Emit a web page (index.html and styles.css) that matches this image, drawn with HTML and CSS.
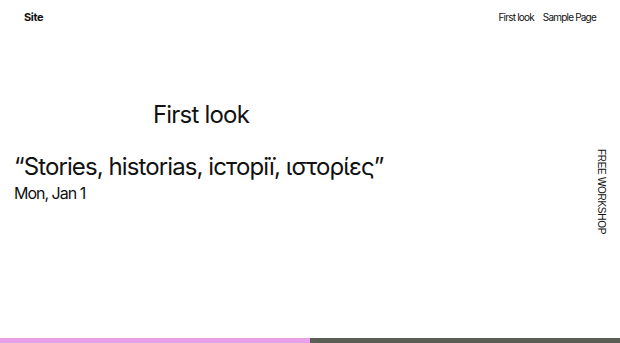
FILE: index.html
```html
<!doctype html>
<html lang="en">
  <head>
    <meta charset="UTF-8" />
    <meta name="viewport" content="width=device-width, initial-scale=1.0" />
    <title>First look</title>
    <link rel="stylesheet" href="styles.css">
  </head>
  <body>
    <header class="site-header">
      <a class="site-title" href="#">Site</a>
      <nav class="site-nav">
        <a href="#">First look</a>
        <a href="#">Sample Page</a>
      </nav>
    </header>

    <main class="page">
      <div class="content">
        <h1 class="page-title">First look</h1>
        <p class="quote">“Stories, historias, історії, ιστορίες”</p>
        <p class="date">Mon, Jan 1</p>
      </div>
      <aside class="side-label">FREE WORKSHOP</aside>
    </main>

    <div class="strip">
      <span class="strip-pink"></span>
      <span class="strip-dark"></span>
    </div>
  </body>
</html>
```

FILE: styles.css
```css
* {
  box-sizing: border-box;
}

html,
body {
  height: 100%;
}

body {
  margin: 0;
  display: flex;
  flex-direction: column;
  font-family: Inter, "Noto Sans", sans-serif;
  color: #111;
  background: #fff;
}

a {
  color: inherit;
  text-decoration: none;
}

.site-header {
  display: flex;
  align-items: center;
  justify-content: space-between;
  padding: 0 24px;
  height: 34px;
}

.site-title {
  font-size: 11px;
  font-weight: 700;
  letter-spacing: -0.4px;
}

.site-nav {
  display: flex;
  gap: 9px;
  font-size: 10px;
  letter-spacing: -0.8px;
}

.page {
  flex: 1;
  display: flex;
  justify-content: space-between;
  padding: 66px 0 0 14px;
}

.content {
  width: 374px;
}

.page-title {
  margin: 0 0 22px 0;
  text-align: center;
  font-size: 24px;
  font-weight: 400;
  letter-spacing: -0.8px;
  line-height: 30px;
}

.quote {
  margin: 0;
  font-size: 24px;
  letter-spacing: -0.9px;
  line-height: 30px;
  white-space: nowrap;
}

.date {
  margin: 0;
  font-size: 16px;
  letter-spacing: -1px;
  line-height: 22px;
}

.side-label {
  writing-mode: vertical-rl;
  font-family: "Liberation Sans", Arial, sans-serif;
  font-size: 10px;
  letter-spacing: -0.3px;
  margin: 49px 13px 0 0;
  height: max-content;
}

.strip {
  display: flex;
  height: 5px;
}

.strip-pink {
  flex: 1;
  background: #e9a0e8;
}

.strip-dark {
  flex: 1;
  background: #5b5e57;
}
```
